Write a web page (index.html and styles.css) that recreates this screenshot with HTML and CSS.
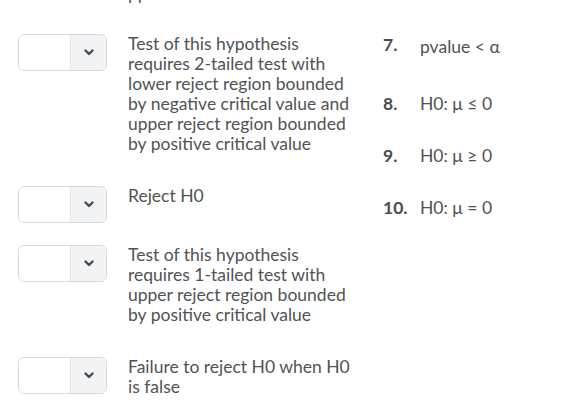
FILE: index.html
```html
<!DOCTYPE html>
<html>
<head>
<meta charset="utf-8">
<link rel="stylesheet" href="styles.css">
</head>
<body>
<div class="page">
  <div class="left">
    <div class="fragment">pp</div>
    <div class="row">
      <div class="select"><div class="sel-val"></div><div class="sel-btn"><svg width="10" height="7" viewBox="0 0 10 7"><path d="M1.5 1.5 L5 5 L8.5 1.5" fill="none" stroke="#494c4e" stroke-width="2.4" stroke-linecap="round" stroke-linejoin="round"/></svg></div></div>
      <div class="text">Test of this hypothesis requires 2-tailed test with lower reject region bounded by negative critical value and upper reject region bounded by positive critical value</div>
    </div>
    <div class="row">
      <div class="select"><div class="sel-val"></div><div class="sel-btn"><svg width="10" height="7" viewBox="0 0 10 7"><path d="M1.5 1.5 L5 5 L8.5 1.5" fill="none" stroke="#494c4e" stroke-width="2.4" stroke-linecap="round" stroke-linejoin="round"/></svg></div></div>
      <div class="text">Reject H0</div>
    </div>
    <div class="row">
      <div class="select"><div class="sel-val"></div><div class="sel-btn"><svg width="10" height="7" viewBox="0 0 10 7"><path d="M1.5 1.5 L5 5 L8.5 1.5" fill="none" stroke="#494c4e" stroke-width="2.4" stroke-linecap="round" stroke-linejoin="round"/></svg></div></div>
      <div class="text">Test of this hypothesis requires 1-tailed test with upper reject region bounded by positive critical value</div>
    </div>
    <div class="row">
      <div class="select"><div class="sel-val"></div><div class="sel-btn"><svg width="10" height="7" viewBox="0 0 10 7"><path d="M1.5 1.5 L5 5 L8.5 1.5" fill="none" stroke="#494c4e" stroke-width="2.4" stroke-linecap="round" stroke-linejoin="round"/></svg></div></div>
      <div class="text">Failure to reject H0 when H0 is false</div>
    </div>
  </div>
  <div class="right">
    <div class="choice first"><span class="num">7.</span><span class="ctext">pvalue &lt; α</span></div>
    <div class="choice"><span class="num">8.</span><span class="ctext">H0: μ ≤ 0</span></div>
    <div class="choice"><span class="num">9.</span><span class="ctext">H0: μ ≥ 0</span></div>
    <div class="choice"><span class="num">10.</span><span class="ctext">H0: μ = 0</span></div>
  </div>
</div>
</body>
</html>
```

FILE: styles.css
```css
html, body {
  margin: 0;
  padding: 0;
  background: #ffffff;
}
body {
  font-family: Lato, "Noto Sans", sans-serif;
  font-size: 17.5px;
  line-height: 20px;
  color: #505356;
  overflow: hidden;
  height: 415px;
}
.page {
  display: flex;
  align-items: flex-start;
}
.left {
  display: flex;
  flex-direction: column;
  gap: 22px;
  padding-left: 18px;
  width: 365px;
  box-sizing: border-box;
}
.fragment {
  margin-top: -16px;
  margin-bottom: 8px;
  padding-left: 110px;
  height: 20px;
  overflow: hidden;
}
.row {
  display: flex;
  align-items: flex-start;
  gap: 21px;
}
.select {
  display: flex;
  width: 89px;
  height: 37px;
  box-sizing: border-box;
  border: 1px solid #d6dae0;
  border-radius: 6px;
  overflow: hidden;
  flex: none;
}
.sel-val {
  flex: 1;
  background: #ffffff;
}
.sel-btn {
  width: 35px;
  background: #f2f3f5;
  border-left: 1px solid #e3e6ea;
  display: flex;
  align-items: center;
  justify-content: center;
}
.sel-btn svg {
  display: block;
}
.text {
  width: 229px;
  padding-bottom: 10px;
}
.right {
  padding-left: 18px;
  padding-top: 37px;
  display: flex;
  flex-direction: column;
}
.choice {
  display: flex;
  height: 20px;
  margin-bottom: 32px;
}
.choice.first {
  margin-bottom: 37px;
}
.num {
  width: 37px;
  font-weight: bold;
  color: #494c4e;
}
.choice.first .num {
  position: relative;
  top: -2px;
}
```
